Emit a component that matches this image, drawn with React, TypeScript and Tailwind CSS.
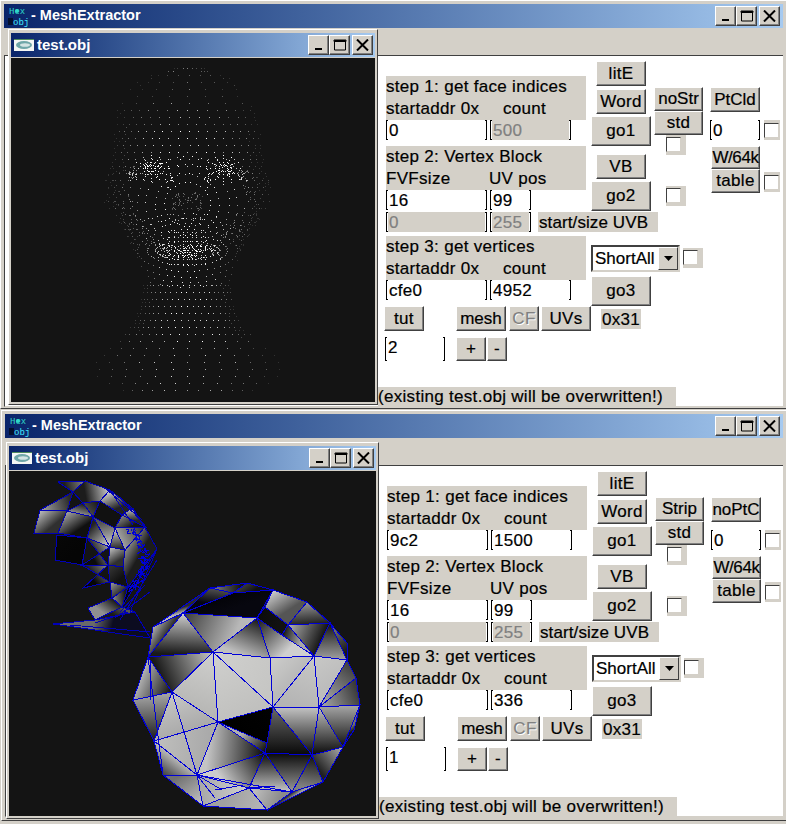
import React from "react";

const SANS = "[font-family:'Liberation_Sans',Arial,sans-serif]";

function Btn({ className, children, disabled }: { className: string; children: React.ReactNode; disabled?: boolean }) {
  return (
    <div
      className={`flex shrink-0 items-center justify-center whitespace-nowrap border border-t-white border-l-white border-r-[#404040] border-b-[#404040] bg-[#d4d0c8] shadow-[inset_-1px_-1px_0_#808080] text-[17px] leading-none pb-px ${disabled ? "text-[#808080] [text-shadow:1px_1px_0_#fff]" : "text-black"} ${className}`}
    >
      {children}
    </div>
  );
}

function Field({ value, className, disabled }: { value: string; className: string; disabled?: boolean }) {
  return (
    <div className={`flex shrink-0 ${className}`}>
      <span className="w-[2px] border-y border-l border-black" />
      <span className={`flex-1 pl-[1px] text-[17px] leading-[21px] ${disabled ? "bg-[#d4d0c8] text-[#808080]" : "text-black"}`}>{value}</span>
      <span className="w-[2px] border-y border-r border-black" />
    </div>
  );
}

function Check({ className, plain }: { className?: string; plain?: boolean }) {
  return (
    <div className={`flex shrink-0 bg-[#d4d0c8] ${plain ? "h-[20px] w-[16px] pt-[3px]" : "h-[20px] w-[20px] pt-[2px]"} ${className ?? ""}`}>
      <div className="h-[15px] w-[15px] border border-t-[#404040] border-l-[#404040] border-r-[#d4d0c8] border-b-[#d4d0c8] bg-white" />
    </div>
  );
}

function Label({ a, b, bx }: { a: string; b: string; bx: string }) {
  return (
    <div className="h-[44px] w-[200px] whitespace-nowrap bg-[#d4d0c8] text-[17px] leading-[22px] text-black">
      <div>{a}</div>
      <div className="flex">
        <span className={bx}>{b.split("|")[0]}</span>
        <span>{b.split("|")[1]}</span>
      </div>
    </div>
  );
}

function Caption({ size }: { size: "main" | "child" }) {
  const cls = "flex h-[20px] items-center justify-center border border-t-white border-l-white border-r-[#404040] border-b-[#404040] bg-[#d4d0c8] shadow-[inset_-1px_-1px_0_#808080]";
  return (
    <div className={`flex items-center ${size === "main" ? "mr-[3px]" : "mr-[2px]"}`}>
      <div className={`${cls} w-[21px]`}>
        <svg width="12" height="12" viewBox="0 0 12 12"><rect x="2" y="9" width="7" height="2" fill="#000" /></svg>
      </div>
      <div className={`${cls} w-[21px]`}>
        <svg width="14" height="12" viewBox="0 0 14 12"><path d="M1.5 1.5h11v9.5h-11z M1 1h12v1.5H1z" fill="none" stroke="#000" /></svg>
      </div>
      <div className={`${cls} ml-[2px] w-[21px]`}>
        <svg width="13" height="12" viewBox="0 0 13 12"><path d="M1 0.5 12 11.5M12 0.5 1 11.5" stroke="#000" strokeWidth="2" /></svg>
      </div>
    </div>
  );
}

function Form({ v }: { v: { a1: string; c1: string; c1d: boolean; strip: string; pt: string; c3: string; n: string } }) {
  return (
    <div className="flex flex-col pl-[381px] pt-[5px] tracking-[0.3px] [-webkit-text-stroke:0.2px_currentColor]">
      <div className="flex h-[150px]">
        <div className="w-[200px] pt-[15px]">
          <Label a="step 1: get face indices" b="startaddr 0x|count" bx="w-[117px]" />
          <div className="flex">
            <Field value={v.a1} className="h-[20px] w-[101px]" />
            <Field value={v.c1} disabled={v.c1d} className="ml-[3px] h-[20px] w-[81px]" />
          </div>
          <div className="mt-[6px]">
            <Label a="step 2: Vertex Block" b="FVFsize|UV pos" bx="w-[103px]" />
          </div>
          <div className="flex">
            <Field value="16" className="h-[20px] w-[101px]" />
            <Field value="99" className="ml-[3px] h-[20px] w-[41px]" />
          </div>
        </div>
        <div className="ml-[5px] flex w-[60px] flex-col items-center">
          <Btn className="h-[25px] w-[50px]">litE</Btn>
          <Btn className="mt-[3px] h-[25px] w-[50px]">Word</Btn>
          <Btn className="mt-[2px] h-[30px] w-[60px]">go1</Btn>
          <Btn className="mt-[8px] h-[25px] w-[50px]">VB</Btn>
          <Btn className="mt-[2px] h-[30px] w-[60px]">go2</Btn>
        </div>
        <div className="ml-[3px] flex w-[49px] flex-col pt-[26px]">
          <Btn className="h-[24px] w-[49px] tracking-normal">{v.strip}</Btn>
          <Btn className="h-[24px] w-[49px]">std</Btn>
          <Check className="ml-[12px]" />
          <Check className="ml-[12px] mt-[31px]" />
        </div>
        <div className="ml-[7px] flex flex-col pt-[26px]">
          <Btn className="h-[25px] w-[50px] tracking-normal">{v.pt}</Btn>
          <div className="mt-[8px] flex">
            <Field value="0" className="h-[20px] w-[50px]" />
            <Check plain className="ml-[4px]" />
          </div>
          <div className="mt-[6px] flex">
            <div className="ml-[1px] flex w-[49px] flex-col">
              <Btn className="h-[23px] w-[49px] tracking-[-0.4px]">W/64k</Btn>
              <Btn className="h-[24px] w-[49px]">table</Btn>
            </div>
            <Check plain className="ml-[4px] mt-[26px]" />
          </div>
        </div>
      </div>
      <div className="flex h-[21px] pt-px">
        <Field value="0" disabled className="h-[20px] w-[101px]" />
        <Field value="255" disabled className="ml-[3px] h-[20px] w-[41px]" />
        <div className="ml-[7px] h-[20px] w-[120px] whitespace-nowrap bg-[#d4d0c8] pl-[1px] text-[17px] leading-[21px] tracking-[0.1px] text-black">start/size UVB</div>
      </div>
      <div className="mt-[4px] flex">
        <div className="w-[200px]">
          <Label a="step 3: get vertices" b="startaddr 0x|count" bx="w-[117px]" />
          <div className="flex">
            <Field value={v.c3.split("|")[0]} className="h-[20px] w-[101px]" />
            <Field value={v.c3.split("|")[1]} className="ml-[3px] h-[20px] w-[81px]" />
          </div>
        </div>
        <div className="ml-[5px] flex flex-col pt-[9px]">
          <div className="flex">
            <div className="flex h-[27px] w-[89px] border-2 border-t-[#404040] border-l-[#404040] border-r-[#d4d0c8] border-b-[#d4d0c8] bg-white pl-[2px] text-[17px] leading-[23px] tracking-normal text-black">
              <span className="flex-1 whitespace-nowrap">ShortAll</span>
              <div className="flex w-[20px] shrink-0 items-center justify-center border border-t-white border-l-white border-r-[#404040] border-b-[#404040] bg-[#d4d0c8]">
                <svg width="9" height="5" viewBox="0 0 9 5"><path d="M0 0h9L4.5 5z" fill="#000" /></svg>
              </div>
            </div>
            <Check className="ml-[3px] mt-[3px]" />
          </div>
          <Btn className="mt-[4px] h-[30px] w-[60px]">go3</Btn>
        </div>
      </div>
      <div className="ml-[-2px] flex h-[25px]">
        <Btn className="h-[25px] w-[40px]">tut</Btn>
        <Btn className="ml-[32px] h-[25px] w-[50px] tracking-normal">mesh</Btn>
        <Btn disabled className="ml-[3px] h-[25px] w-[30px]">CF</Btn>
        <Btn className="ml-[2px] h-[25px] w-[50px]">UVs</Btn>
        <div className="ml-[10px] mt-[3px] h-[20px] w-[40px] bg-[#d4d0c8] text-center text-[17px] leading-[21px] text-black">0x31</div>
      </div>
      <div className="ml-[-1px] mt-[6px] flex h-[24px]">
        <Field value={v.n} className="h-[24px] w-[60px]" />
        <Btn className="ml-[11px] h-[24px] w-[30px]">+</Btn>
        <Btn className="ml-[1px] h-[24px] w-[20px]">-</Btn>
      </div>
      <div className="ml-[-8px] mt-[26px] h-[19px] w-[298px] whitespace-nowrap bg-[#d4d0c8] text-[17px] leading-[19px] text-black">(existing test.obj will be overwritten!)</div>
    </div>
  );
}

/* ---------- point cloud ---------- */
let seed = 12345;
const rnd = () => {
  seed = (seed * 16807) % 2147483647;
  return seed / 2147483647;
};
const CX = 187;
const WIDTH: [number, number][] = [
  [67, 14], [76, 42], [90, 60], [110, 70], [130, 73], [150, 74], [172, 78], [180, 84], [205, 83], [225, 68], [245, 56], [265, 48], [285, 44], [305, 47], [325, 55], [343, 74], [360, 94], [378, 92], [394, 58],
];
const hw = (y: number) => {
  for (let i = 0; i < WIDTH.length - 1; i++) {
    const [a, w0] = WIDTH[i];
    const [b, w1] = WIDTH[i + 1];
    if (y >= a && y <= b) return w0 + ((w1 - w0) * (y - a)) / (b - a);
  }
  return 0;
};
type Dot = [number, number, number];
const dots: Dot[] = [];
const add = (x: number, y: number, base = 1) => {
  const w = hw(y);
  if (!w || Math.abs(x - CX) > w) return;
  const edge = Math.abs(x - CX) / w;
  const b = (262 - 205 * edge * edge) * base * (0.7 + rnd() * 0.4);
  dots.push([Math.round(x), Math.round(y), Math.min(255, Math.max(50, Math.round(b)))]);
};
for (let r = 0; r < 48; r++) {
  const y = 68 + r * 7;
  const w = hw(y);
  if (!w) continue;
  const faceRow = y > 178 && y < 282;
  const step = y < 120 ? 9 : y > 335 ? 11 : 8;
  const top = y < 100 ? 0.45 : y < 125 ? 0.7 : y > 345 ? 0.8 : 1;
  for (let k = -14; k <= 14; k++) {
    if (y < 105 && k % 2) continue;
    const u = k / 14;
    const x = CX + Math.sin(u * 1.5) * step * 14 * (w / 95);
    if (faceRow && Math.abs(x - CX) < 52) continue;
    add(x + (rnd() - 0.5) * 1.2 + (r % 2) * 2, y + (rnd() - 0.5), top);
    if (Math.abs(u) > 0.55 && rnd() < 0.5) add(x + (u > 0 ? -3 : 3), y + 3, 0.65);
  }
}
for (let i = 0; i < 170; i++) {
  const side = i % 2 ? 1 : -1;
  const y = 165 + rnd() * 85;
  add(CX + side * (hw(y) - rnd() * 28), y, 0.7);
}
const ring = (cx: number, cy: number, rx: number, ry: number, n: number, base = 1) => {
  for (let i = 0; i < n; i++) {
    const t = (Math.PI * 2 * i) / n + rnd() * 0.05;
    add(cx + Math.cos(t) * rx, cy + Math.sin(t) * ry, base);
  }
};
for (const [rx, ry, n] of [[23, 22, 26], [32, 30, 30], [42, 40, 34], [50, 48, 38]] as const) ring(CX, 204, rx, ry, n, 1);
for (let i = 0; i < 70; i++) add(CX - 15 + rnd() * 30, 192 + rnd() * 18, 0.42);
for (let i = 0; i < 16; i++) add(CX - 18 + rnd() * 36, 214 + rnd() * 8, 0.75);
for (const [rx, ry, n] of [[32, 9, 34], [40, 15, 42], [50, 21, 44], [58, 27, 46], [66, 32, 46], [72, 37, 42]] as const) ring(CX, 250, rx, ry, n, 1);
for (let k = -4; k <= 4; k++) for (let j = 0; j < 8; j++) add(CX + k * 4.5, 232 + j * 4.5, 1);
for (let i = 0; i < 150; i++) add(CX - 34 + rnd() * 68, 244 + rnd() * 14, 1);
for (const ex of [151, 223]) {
  for (let i = 0; i < 12; i++) {
    const t = (i / 12) * Math.PI * 2;
    for (const r of [4, 8, 12, 16]) add(ex + Math.cos(t) * r * 1.05, 168 + Math.sin(t) * r * 0.8, 1.35);
  }
  for (let i = 0; i < 24; i++) add(ex - 10 + rnd() * 20, 162 + rnd() * 12, 1.4);
}
for (const ex of [132, 243]) for (let i = 0; i < 24; i++) add(ex - 5 + rnd() * 10, 170 + rnd() * 10, 1.2);
for (const ex of [169, 207]) for (let i = 0; i < 12; i++) add(ex - 4 + rnd() * 8, 174 + rnd() * 14, 1.1);

function Cloud() {
  return (
    <svg className="block h-full w-full" viewBox="11 58 364 344" shapeRendering="crispEdges">
      {dots.map((d, i) => (
        <rect key={i} x={d[0]} y={d[1]} width="1" height="1" fill={`rgb(${d[2]},${d[2]},${d[2]})`} />
      ))}
    </svg>
  );
}

/* ---------- shaded mesh ---------- */
const V: Record<string, [number, number]> = {
  a: [58, 482], b: [85, 481], c: [73, 492], d: [110, 490], e: [40, 510], f: [67, 511], g: [83, 503], h: [100, 501], i: [34, 533], j: [58, 533], k: [93, 517], l: [87, 538], m: [115, 528], n: [122, 515], o: [132, 508], p: [145, 527], q: [110, 547], r: [125, 550], s: [108, 565], t: [82, 565], u: [55, 560], uu: [57, 535], v: [83, 588], w: [110, 582], x: [123, 567], y: [128, 587], z: [112, 598], aa: [88, 608], bb: [122, 607], cc: [95, 620], dd: [157, 549], ee: [53, 624], ff: [150, 638], gg: [135, 612],
  A: [213, 652], B: [270, 658], C: [314, 656], D: [347, 660], E: [273, 707], F: [319, 707], G: [360, 705], H: [218, 722], I: [172, 692], J: [148, 657], K: [133, 700], L: [154, 741], M: [197, 775], N: [265, 753], O: [312, 755], P: [343, 747], Q: [163, 775], R: [203, 806], S: [267, 810], T: [292, 792], U: [323, 782], W: [249, 788], Y: [356, 678], Z: [354, 730], h4: [267, 743],
  b1: [183, 613], b2: [153, 627], b3: [210, 588], b4: [247, 583], b5: [273, 590], b6: [307, 602], b7: [330, 623], b8: [257, 618], b10: [347, 643], h1: [265, 607], h2: [288, 625], h3: [282, 635], d1: [233, 593],
};
// [vertices, colour at start, colour at end, direction]: without a direction the ramp runs
// from the first vertex to the middle of the others; "down" runs from the top to the bottom.
type Face = [string, string, string, string?];
const F = (s: string, c1: string, c2: string, dir?: string): Face => [s, c1, c2, dir];
const shell: Face[] = [
  F("b c a", "#8a8a8a", "#1e1e1e"), F("d h g c b", "#d0d0d0", "#1c1c1c"), F("e c f", "#a8a8a8", "#2a2a2a"),
  F("e f j i", "#c0c0c0", "#303030"), F("g f k", "#111111", "#8a8a8a"), F("h g k", "#111111", "#444444"),
  F("f k l j", "#a8a8a8", "#101010"), F("h n m k", "#111111", "#111111"), F("d o n h", "#d8d8d8", "#222222"),
  F("o p n", "#c8c8c8", "#242424"), F("n p m", "#888888", "#141414"), F("q k l", "#dcdcdc", "#222222"), F("q m k", "#d0d0d0", "#555555"),
  F("m r q", "#d8d8d8", "#2a2a2a"), F("p m r", "#2a2a2a", "#a0a0a0"), F("q l s t", "#a0a0a0", "#0c0c0c"), F("q r x s", "#c8c8c8", "#303030"),
  F("uu l t u", "#070707", "#050505"), F("s t w v", "#8a8a8a", "#060606"), F("s x y w", "#3a3a3a", "#121212"), F("w y z", "#a0a0a0", "#303030"), F("z y bb", "#909090", "#1c1c1c"),
  F("z bb cc aa", "#161616", "#909090"), F("r p dd y x", "#8c8c8c", "#1c1c1c"), F("y dd bb", "#050510", "#141414"), F("bb gg cc", "#555555", "#1a1a1a"), F("cc gg ff ee", "#6a6a6a", "#0c0c20"),
];
const ball: Face[] = [
  F("b1 b3 b2", "#b4b4b4", "#2a2a2a"), F("b3 b4 d1", "#8a8a8a", "#161616"), F("d1 b5 b8 b1", "#030308", "#07070f"), F("b3 d1 b1", "#505050", "#050510"), F("b4 b5 d1", "#3a3a3a", "#101010"),
  F("b5 h1 b8", "#1a1a1a", "#1a1a1a"), F("b5 b6 h2 h1", "#d0d0d0", "#555555"), F("b8 h1 h2 h3", "#0b0b0b", "#111111"), F("b6 b7 h2", "#9a9a9a", "#232323"), F("b7 b10 D", "#888888", "#181818"),
  F("b7 D C", "#111111", "#9a9a9a"), F("h2 b7 C", "#b0b0b0", "#151515"), F("h3 h2 C", "#111111", "#a8a8a8"), F("b8 h3 C B", "#151515", "#cfcfcf"),
  F("b8 B A", "#151515", "#bfbfbf"), F("b1 b8 A", "#3a3a3a", "#b8b8b8"), F("b2 b1 J", "#b0b0b0", "#333333"), F("b1 A J", "#d0d0d0", "#1a1a1a"),
  F("A I J", "#c8c8c6", "#1a1a1a"), F("I J K", "#101010", "#b0b0b0"), F("L K I", "#1a1a1a", "#a0a0a0"),
  F("A B E", "#d0d0ce", "#c6c6c4"), F("B C E", "#cdcdcb", "#b8b8b8"), F("C F E", "#c8c8c6", "#b4b4b4"), F("C D F", "#c8c8c6", "#bcbcbc"),
  F("F D Y", "#b8b8b8", "#454545"), F("F Y G", "#b0b0b0", "#3a3a3a"),
  F("A E H", "#d0d0ce", "#c0c0be"), F("A H I", "#cfcfcd", "#b8b8b6"), F("I H L", "#c8c8c6", "#aaaaaa"),
  F("O E F", "#c4c4c4", "#0a0a0a", "down"), F("N O E h4", "#6a6a6a", "#080808", "down"), F("E H h4", "#030303", "#000000"),
  F("O F P", "#c0c0c0", "#0a0a0a", "down"), F("P F G", "#a8a8a8", "#101010", "down"), F("Z G P", "#1a1a1a", "#707070"),
  F("N H h4", "#0a0a0a", "#b0b0b0"), F("L H M", "#c0c0be", "#aaaaaa"), F("N H M", "#0a0a0a", "#c4c4c4"),
  F("Q L M", "#404040", "#b8b8b8"), F("R Q M", "#c8c8c8", "#707070"), F("W M R", "#d0d0d0", "#a8a8a8"), F("S R W", "#b8b8b8", "#a0a0a0"), F("N M W", "#0a0a0a", "#cccccc"),
  F("N W T", "#0a0a0a", "#c8c8c8", "down"), F("W T S", "#c8c8c8", "#8a8a8a"), F("N O T", "#0a0a0a", "#9a9a9a", "down"), F("O U T", "#101010", "#808080"), F("P O U", "#b0b0b0", "#202020"), F("T U S", "#202020", "#a0a0a0"),
];
const faces = [...shell, ...ball];
const EXTRA = ["I M", "A H", "E O", "F O", "F P", "M T", "J Q", "D F", "O U", "N W"];
const EXTRA_RAW: [number, number, number, number][] = [
  [197, 775, 222, 790], [197, 775, 215, 798], [215, 790, 243, 785], [249, 788, 275, 786], [150, 660, 150, 700],
  [53, 624, 150, 638], [70, 625, 150, 632], [95, 623, 128, 612], [115, 618, 150, 592], [120, 620, 157, 560], [130, 612, 157, 549], [120, 612, 145, 585],
  [110, 490, 133, 525], [105, 488, 142, 520], [120, 497, 147, 528], [133, 508, 146, 530],
];
const tangle: string[] = [];
{
  let s = 77;
  const rn = () => (s = (s * 16807) % 2147483647) / 2147483647;
  for (let i = 0; i < 130; i++) {
    const t = rn();
    const x = 128 + Math.sin(t * 3.14) * 13 + rn() * 7;
    const y = 530 + t * 60;
    tangle.push(`M${x.toFixed(0)} ${y.toFixed(0)}L${(x + rn() * 8 - 4).toFixed(0)} ${(y + rn() * 7 - 3.5).toFixed(0)}`);
  }
}
const BLUE = "#0000d8";
function Mesh() {
  return (
    <svg className="block h-full w-full" viewBox="9 471 367 345" shapeRendering="crispEdges">
      <defs>
        {faces.map((f, i) => {
          const pts = f[0].split(" ").map((n) => V[n]);
          const rest = pts.slice(1);
          const mx = rest.reduce((s, p) => s + p[0], 0) / rest.length;
          const my = rest.reduce((s, p) => s + p[1], 0) / rest.length;
          const ys = pts.map((p) => p[1]);
          const down = f[3] === "down";
          return (
            <linearGradient
              key={i}
              id={`g${i}`}
              gradientUnits="userSpaceOnUse"
              x1={down ? mx : pts[0][0]}
              y1={down ? Math.min(...ys) : pts[0][1]}
              x2={mx}
              y2={down ? Math.max(...ys) : my}
            >
              <stop offset="0" stopColor={f[1]} />
              <stop offset="1" stopColor={f[2]} />
            </linearGradient>
          );
        })}
      </defs>
      {faces.map((f, i) => (
        <polygon key={i} points={f[0].split(" ").map((n) => V[n].join(",")).join(" ")} fill={`url(#g${i})`} />
      ))}
      {faces.map((f, i) => (
        <polygon key={i} points={f[0].split(" ").map((n) => V[n].join(",")).join(" ")} fill="none" stroke={i < shell.length ? "#0000b8" : BLUE} strokeWidth="1" />
      ))}
      {EXTRA.map((e, i) => {
        const [p, q] = e.split(" ").map((n) => V[n]);
        return <line key={i} x1={p[0]} y1={p[1]} x2={q[0]} y2={q[1]} stroke={BLUE} />;
      })}
      {EXTRA_RAW.map((l, i) => (
        <line key={i} x1={l[0]} y1={l[1]} x2={l[2]} y2={l[3]} stroke={i > 4 ? "#0000b8" : BLUE} />
      ))}
      <path d={tangle.join("")} stroke={BLUE} fill="none" />
    </svg>
  );
}

function Hex2Obj() {
  return (
    <svg width="23" height="22" viewBox="0 0 23 22" className="ml-[3px] shrink-0" style={{ fontFamily: "'Liberation Mono',monospace" }}>
      <text x="2" y="9" fontSize="9" fill="#2fd8c8">Hex</text>
      <circle cx="10" cy="6" r="2" fill="#2fd8c8" />
      <rect x="1" y="13" width="5" height="7" fill="#04102e" />
      <text x="6" y="20" fontSize="9" fill="#40e8ff">obj</text>
    </svg>
  );
}

function Window({ className, child, form }: { className: string; child: React.ReactNode; form: React.ReactNode }) {
  return (
    <div className={`relative flex flex-col border border-t-white border-l-white border-r-[#404040] border-b-[#404040] bg-[#d4d0c8] p-[3px] ${className}`}>
      <div className="flex h-[24px] shrink-0 items-center justify-between bg-gradient-to-r from-[#0a246a] to-[#a6caf0]">
        <div className="flex items-center">
          <Hex2Obj />
          <span className="ml-px pb-[2px] text-[14.5px] font-bold leading-none text-white">- MeshExtractor</span>
        </div>
        <Caption size="main" />
      </div>
      <div className="h-[27px] shrink-0" />
      <div className="flex-1 border-t border-l border-t-[#404040] border-l-[#404040] border-b border-b-[#d4d0c8] bg-white">{form}</div>
      {child}
    </div>
  );
}

function Child({ className, client, clientH }: { className: string; client: React.ReactNode; clientH: string }) {
  return (
    <div className={`absolute border border-t-white border-l-white border-r-[#404040] border-b-[#404040] bg-[#d4d0c8] px-[2px] pb-[2px] pt-[3px] ${className}`}>
      <div className="flex h-[24px] items-center justify-between bg-gradient-to-r from-[#0a246a] to-[#a6caf0]">
        <div className="flex items-center">
          <svg width="20" height="12" viewBox="0 0 20 12" className="ml-[3px]">
            <rect width="20" height="12" fill="#f4f6f4" />
            <rect width="20" height="1" fill="#4f8a5c" />
            <ellipse cx="10" cy="6" rx="8" ry="4" fill="#6fa6a8" />
            <ellipse cx="11" cy="6" rx="5" ry="1.8" fill="#d4e4e4" />
          </svg>
          <span className="ml-[3px] pb-px text-[15px] font-bold leading-none text-white">test.obj</span>
        </div>
        <Caption size="child" />
      </div>
      <div className={`mt-px bg-[#141414] ${clientH}`}>{client}</div>
    </div>
  );
}

export default function App() {
  return (
    <div className={`h-[824px] w-[786px] overflow-hidden bg-[#d4d0c8] ${SANS}`}>
      <Window
        className="h-[409px] w-[787px]"
        child={<Child className="left-[7px] top-[28px] w-[370px]" clientH="h-[344px]" client={<Cloud />} />}
        form={<Form v={{ a1: "0", c1: "500", c1d: true, strip: "noStr", pt: "PtCld", c3: "cfe0|4952", n: "2" }} />}
      />
      <Window
        className="ml-px mt-px h-[411px] w-[786px]"
        child={<Child className="left-[4px] top-[31px] w-[373px]" clientH="h-[345px]" client={<Mesh />} />}
        form={<Form v={{ a1: "9c2", c1: "1500", c1d: false, strip: "Strip", pt: "noPtC", c3: "cfe0|336", n: "1" }} />}
      />
    </div>
  );
}
